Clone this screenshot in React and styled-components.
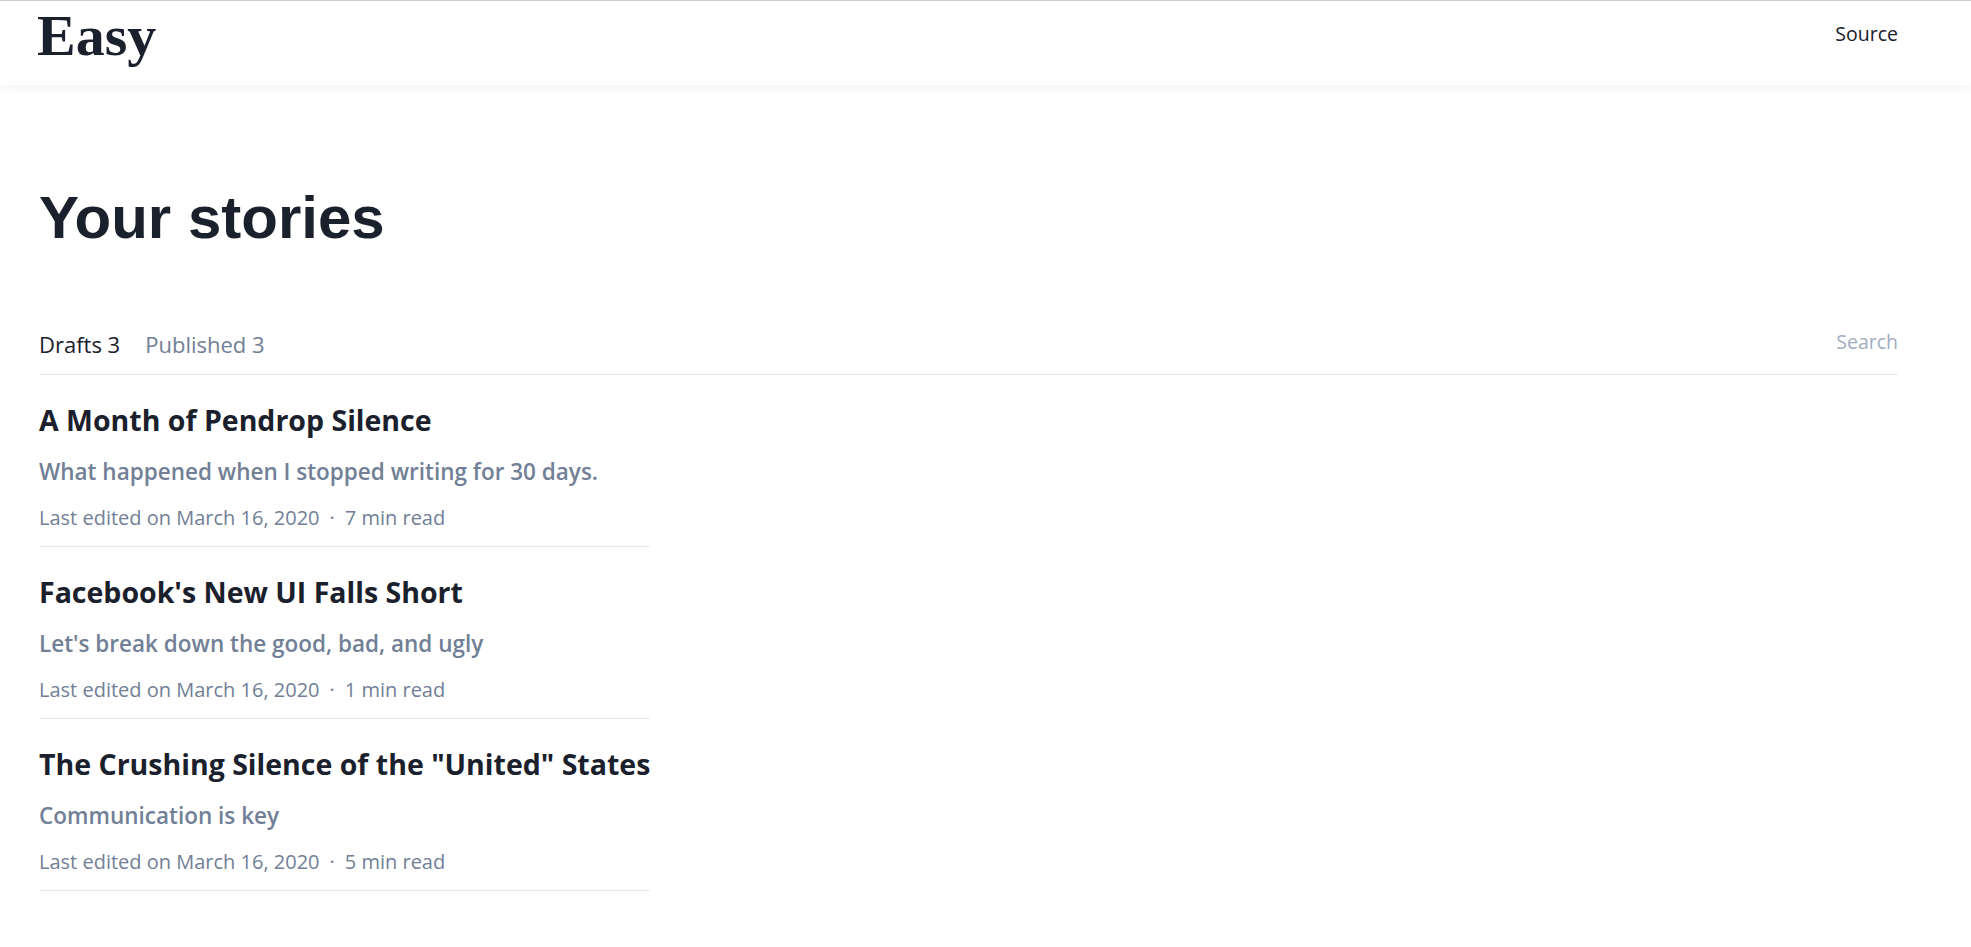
import React from 'react';
import styled, { createGlobalStyle } from 'styled-components';

const stories = [
  {
    title: 'A Month of Pendrop Silence',
    subtitle: 'What happened when I stopped writing for 30 days.',
    edited: 'March 16, 2020',
    read: '7 min read',
  },
  {
    title: "Facebook's New UI Falls Short",
    subtitle: "Let's break down the good, bad, and ugly",
    edited: 'March 16, 2020',
    read: '1 min read',
  },
  {
    title: 'The Crushing Silence of the "United" States',
    subtitle: 'Communication is key',
    edited: 'March 16, 2020',
    read: '5 min read',
  },
];

const App = () => {
  return (
    <>
      <GlobalStyle />
      <Header>
        <Logo>Easy</Logo>
        <NavLink>Source</NavLink>
      </Header>
      <Main>
        <PageTitle>Your stories</PageTitle>
        <TabBar>
          <Tabs>
            <Tab active>Drafts 3</Tab>
            <Tab>Published 3</Tab>
          </Tabs>
          <SearchInput placeholder="Search" />
        </TabBar>
        <StoryList>
          {stories.map((story) => (
            <StoryItem key={story.title}>
              <StoryTitle>{story.title}</StoryTitle>
              <StorySubtitle>{story.subtitle}</StorySubtitle>
              <Meta>
                Last edited on {story.edited}
                <Dot>·</Dot>
                {story.read}
              </Meta>
            </StoryItem>
          ))}
        </StoryList>
      </Main>
    </>
  );
};

const GlobalStyle = createGlobalStyle`
  * {
    box-sizing: border-box;
  }
  body {
    margin: 0;
    background: #fff;
    color: #1a202c;
    font-family: "Open Sans", "Noto Sans", sans-serif;
  }
`;

const Header = styled.header`
  display: flex;
  justify-content: space-between;
  align-items: flex-start;
  height: 85px;
  padding: 0 73px 0 39px;
  border-top: 1px solid #cfcfcf;
  background: #fff;
  box-shadow: 0 3px 10px rgba(0, 0, 0, 0.05);
`;

const Logo = styled.div`
  margin: 6px 0 0 -2px;
  font-family: "Liberation Serif", "DejaVu Serif", serif;
  font-weight: 700;
  font-size: 58px;
  line-height: 58px;
  color: #1a202c;
`;

const NavLink = styled.a`
  margin-top: 19px;
  font-size: 19.5px;
  line-height: 28px;
  color: #1a202c;
  cursor: pointer;
`;

const Main = styled.main`
  padding: 97px 73px 40px 39px;
`;

const PageTitle = styled.h1`
  margin: 0;
  font-family: "Liberation Sans", Arial, sans-serif;
  font-weight: 700;
  font-size: 60px;
  line-height: 72px;
  color: #1a202c;
`;

const TabBar = styled.div`
  display: flex;
  justify-content: space-between;
  align-items: center;
  margin-top: 74px;
  padding-bottom: 14px;
  border-bottom: 1px solid #e2e8f0;
`;

const Tabs = styled.div`
  display: flex;
  gap: 25px;
`;

const Tab = styled.span`
  font-size: 22px;
  line-height: 30px;
  color: ${(props) => (props.active ? '#1a202c' : '#718096')};
  cursor: pointer;
`;

const SearchInput = styled.input`
  width: 200px;
  border: none;
  outline: none;
  padding: 0;
  margin-bottom: 4px;
  text-align: right;
  font-family: inherit;
  font-size: 19.5px;
  line-height: 28px;
  background: transparent;
  color: #1a202c;
  &::placeholder {
    color: #a0aec0;
  }
`;

const StoryList = styled.div`
  display: grid;
  width: max-content;
`;

const StoryItem = styled.article`
  padding: 27px 0 15px;
  border-bottom: 1px solid #e2e8f0;
`;

const StoryTitle = styled.h2`
  margin: 0;
  font-size: 28.5px;
  line-height: 37px;
  font-weight: 700;
  color: #1a202c;
`;

const StorySubtitle = styled.p`
  margin: 18px 0 0;
  font-size: 22.5px;
  line-height: 30px;
  font-weight: 600;
  color: #718096;
`;

const Meta = styled.div`
  margin-top: 17px;
  font-size: 20px;
  line-height: 27px;
  color: #718096;
`;

const Dot = styled.span`
  margin: 0 10px;
`;

export default App;
